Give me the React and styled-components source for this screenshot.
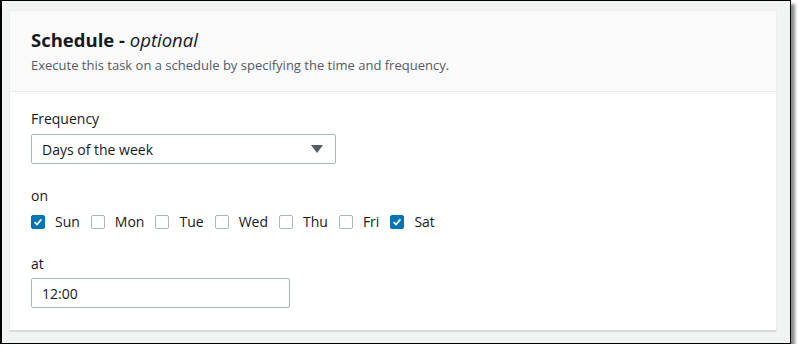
import React from "react";
import styled, { createGlobalStyle } from "styled-components";

const days = [
  { name: "Sun", checked: true },
  { name: "Mon" },
  { name: "Tue" },
  { name: "Wed" },
  { name: "Thu" },
  { name: "Fri" },
  { name: "Sat", checked: true },
];

const App = () => {
  return (
    <>
      <GlobalStyle />
      <StyledFrame>
        <StyledCard>
          <StyledHeader>
            <h2>
              Schedule - <em>optional</em>
            </h2>
            <p>Execute this task on a schedule by specifying the time and frequency.</p>
          </StyledHeader>
          <StyledBody>
            <StyledField>
              <StyledLabel>Frequency</StyledLabel>
              <StyledSelect>
                <span>Days of the week</span>
                <StyledCaret viewBox="0 0 12 10">
                  <path d="M0 1h12L6 9z" />
                </StyledCaret>
              </StyledSelect>
            </StyledField>
            <StyledField $gap={6}>
              <StyledLabel>on</StyledLabel>
              <StyledDays>
                {days.map((day) => (
                  <StyledDay key={day.name}>
                    <StyledCheck $checked={day.checked}>
                      {day.checked && (
                        <svg viewBox="0 0 14 14">
                          <path d="M3 7.2l2.8 2.8L11 4" />
                        </svg>
                      )}
                    </StyledCheck>
                    {day.name}
                  </StyledDay>
                ))}
              </StyledDays>
            </StyledField>
            <StyledField $gap={4}>
              <StyledLabel>at</StyledLabel>
              <StyledInput>12:00</StyledInput>
            </StyledField>
          </StyledBody>
        </StyledCard>
      </StyledFrame>
    </>
  );
};

const GlobalStyle = createGlobalStyle`
  body {
    margin: 0;
    background: #fff;
    font-family: "Open Sans", "Noto Sans", sans-serif;
    color: #16191f;
  }
`;

const StyledFrame = styled.div`
  box-sizing: border-box;
  width: 791px;
  height: 344px;
  padding: 9px 13px 11px 7px;
  background: #f2f3f3;
  border: 1px solid #000;
  border-left-width: 2px;
  box-shadow: 4px 4px 3px rgba(0, 0, 0, 0.45);
`;

const StyledCard = styled.div`
  box-sizing: border-box;
  height: 100%;
  background: #fff;
  border: 1px solid #eaeded;
  border-bottom: 2px solid #d5dbdb;
  display: flex;
  flex-direction: column;
`;

const StyledHeader = styled.div`
  height: 81px;
  box-sizing: border-box;
  padding: 16px 21px 0;
  background: #fafafa;
  border-bottom: 1px solid #eaeded;

  h2 {
    margin: 0;
    font-size: 18.5px;
    line-height: 26px;
    font-weight: 700;
  }

  em {
    font-weight: 400;
  }

  p {
    margin: 3px 0 0;
    font-size: 13px;
    line-height: 18px;
    color: #545b64;
  }
`;

const StyledBody = styled.div`
  padding: 17px 21px 0;
  display: flex;
  flex-direction: column;
  gap: 22px;
`;

const StyledField = styled.div`
  display: flex;
  flex-direction: column;
  gap: ${(p) => p.$gap || 5}px;
`;

const StyledLabel = styled.div`
  font-size: 14px;
  line-height: 20px;
`;

const StyledSelect = styled.div`
  box-sizing: border-box;
  width: 305px;
  height: 30px;
  padding: 0 12px 0 10px;
  display: flex;
  align-items: center;
  justify-content: space-between;
  border: 1px solid #aab7b8;
  border-radius: 2px;
  font-size: 14px;
`;

const StyledCaret = styled.svg`
  width: 12px;
  height: 10px;
  fill: #545b64;
`;

const StyledDays = styled.div`
  display: flex;
  align-items: center;
  gap: 11px;
`;

const StyledDay = styled.label`
  display: flex;
  align-items: center;
  gap: 10px;
  font-size: 14px;
  line-height: 20px;
`;

const StyledCheck = styled.span`
  box-sizing: border-box;
  width: 14px;
  height: 14px;
  border-radius: 2px;
  border: 1px solid ${(p) => (p.$checked ? "#0073bb" : "#aab7b8")};
  background: ${(p) => (p.$checked ? "#0073bb" : "#fff")};
  display: flex;

  svg {
    width: 100%;
    height: 100%;
    fill: none;
    stroke: #fff;
    stroke-width: 2;
  }
`;

const StyledInput = styled.div`
  box-sizing: border-box;
  width: 259px;
  height: 30px;
  padding: 0 10px;
  display: flex;
  align-items: center;
  border: 1px solid #aab7b8;
  border-radius: 2px;
  font-size: 14px;
`;

export default App;
